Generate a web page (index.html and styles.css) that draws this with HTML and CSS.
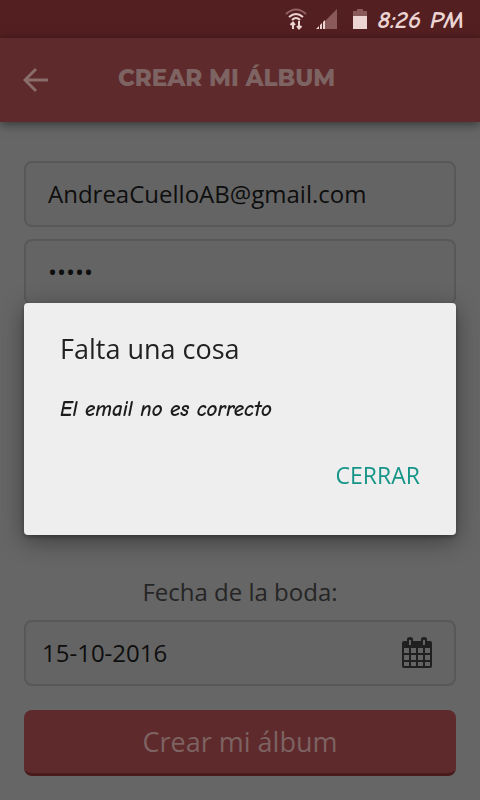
FILE: index.html
```html
<!DOCTYPE html>
<html lang="es">
<head>
<meta charset="utf-8">
<meta name="viewport" content="width=device-width, initial-scale=1">
<title>Crear mi álbum</title>
<link rel="stylesheet" href="styles.css">
</head>
<body>
<div class="status">
  <svg class="status-wifi" width="22" height="24" viewBox="0 0 22 24" fill="none" stroke-width="2">
    <path d="M1 7Q11-2 21 7" stroke="#8f6263"/>
    <path d="M4 10Q11 4 18 10M7 13Q11 9 15 13" stroke="#ecd4d3"/>
    <path d="M8 22V15M5.500 18L8 15.500L10 18M14 14V21M12 19L14 21.500L16.500 19" stroke="#ecd4d3"/>
  </svg>
  <svg class="status-signal" width="22" height="22" viewBox="0 0 22 22">
    <path d="M9 13L21 1V21H9Z" fill="#8a5a5a"/>
    <path d="M0 21L3 18V21ZM4 21V17L6 15V21ZM7 21V14L9 12V21Z" fill="#ecd4d3"/>
  </svg>
  <svg class="status-battery" width="14" height="22" viewBox="0 0 14 22">
    <path d="M0 3H4V1H10V3H14V8H0Z" fill="#8a5a5a"/>
    <path d="M0 8H14V21H0Z" fill="#ecd4d3"/>
  </svg>
  <span class="clock">8:26 PM</span>
</div>
<header class="topbar">
  <button class="back" type="button" aria-label="Atrás">
    <svg width="26" height="26" viewBox="0 0 26 26" fill="none" stroke="#8a6c6a" stroke-width="3"><path d="M25 13H3M13 2L2 13L13 24"/></svg>
  </button>
  <h1 class="title">CREAR MI ÁLBUM</h1>
</header>
<main>
  <form class="form">
    <input class="field" type="email" aria-label="Email" value="AndreaCuelloAB@gmail.com">
    <input class="field" type="password" aria-label="Contraseña" value="album">
    <label class="date-label" for="date">Fecha de la boda:</label>
    <div class="date-row">
      <input class="field date" id="date" type="text" value="15-10-2016">
      <svg class="calendar" width="30" height="32" viewBox="0 0 30 32">
        <path fill="#202020" fill-rule="evenodd" d="M2 4H5V2Q5 0 8 0T11 2V4H19V2Q19 0 22 0T25 2V4H28Q30 4 30 6V29Q30 31 28 31H2Q0 31 0 29V6Q0 4 2 4ZM7 3V8H9V3ZM21 3V8H23V3ZM2 11V16H7V11ZM9 11V16H14V11ZM16 11V16H21V11ZM23 11V16H28V11ZM2 18V23H7V18ZM9 18V23H14V18ZM16 18V23H21V18ZM23 18V23H28V18ZM2 25V29H7V25ZM9 25V29H14V25ZM16 25V29H21V25ZM23 25V29H28V25Z"/>
      </svg>
    </div>
    <button class="submit" type="button">Crear mi álbum</button>
  </form>
</main>
<div class="overlay">
  <section class="dialog" role="alertdialog" aria-labelledby="dialog-title" aria-describedby="dialog-text">
    <h2 class="dialog-title" id="dialog-title">Falta una cosa</h2>
    <p class="dialog-text" id="dialog-text">El email no es correcto</p>
    <button class="close" type="button">CERRAR</button>
  </section>
</div>
</body>
</html>
```
FILE: styles.css
```css
* { box-sizing: border-box; }

body {
  margin: 0;
  min-height: 100vh;
  background: #666;
  color: #0e0e0e;
  font-family: "Open Sans", "Noto Sans", sans-serif;
  font-size: 24px;
}

button, input { font: inherit; color: inherit; }

.status {
  display: flex;
  align-items: center;
  justify-content: flex-end;
  height: 38px;
  padding-right: 16px;
  background: #541f21;
  color: #ecd4d3;
}

.status-wifi { margin-right: 9px; }
.status-signal { margin-right: 15px; }
.status-battery { margin-right: 10px; }

.clock {
  font-family: "Comic Neue", "Lato", sans-serif;
  font-size: 25px;
  font-style: italic;
  font-weight: 700;
}

.topbar {
  display: flex;
  align-items: center;
  height: 84px;
  padding: 0 23px;
  background: #5f2a2c;
  box-shadow: 0 2px 10px rgba(0, 0, 0, 0.5);
}

.back {
  display: flex;
  padding: 0;
  border: 0;
  background: none;
}

.title {
  margin: 0 0 4px 69px;
  color: #7d6362;
  font-family: "Montserrat", "Inter", sans-serif;
  font-size: 23px;
  font-weight: 800;
  white-space: nowrap;
}

.form {
  display: flex;
  flex-direction: column;
  padding: 39px 24px 24px;
}

.field {
  width: 100%;
  height: 66px;
  margin-bottom: 12px;
  padding: 0 22px 2px;
  border: 2px solid #585858;
  border-radius: 8px;
  background: #646464;
}

.date-label {
  margin: 257px 0 10px;
  color: #252525;
  line-height: 36px;
  text-align: center;
}

.date-row {
  display: flex;
  align-items: center;
  margin-bottom: 24px;
  padding-right: 22px;
  border: 2px solid #585858;
  border-radius: 8px;
  background: #646464;
}

.date {
  flex: 1;
  width: auto;
  min-width: 0;
  height: 62px;
  margin: 0;
  padding: 0 16px 2px;
  border: 0;
  background: none;
}

.submit {
  height: 66px;
  padding: 0;
  border: 0;
  border-bottom: 3px solid #491b1d;
  border-radius: 8px;
  background: #5f2a2c;
  color: #7d6362;
  font-size: 27px;
}

.overlay {
  position: fixed;
  inset: 38px 0 0;
  display: flex;
  align-items: center;
  justify-content: center;
  padding: 0 24px;
}

.dialog {
  display: flex;
  flex-direction: column;
  width: 100%;
  padding: 28px 36px 36px;
  border-radius: 4px;
  background: #eee;
  box-shadow: 0 6px 24px rgba(0, 0, 0, 0.4), 0 2px 4px rgba(0, 0, 0, 0.3);
}

.dialog-title {
  margin: 0 0 24px;
  color: #212121;
  font-size: 27px;
  font-weight: 400;
  line-height: 36px;
}

.dialog-text {
  margin: 0 0 24px;
  color: #1c1c1c;
  font-family: "Comic Neue", "Lato", sans-serif;
  font-size: 21px;
  font-style: italic;
  font-weight: 700;
  line-height: 36px;
}

.close {
  align-self: flex-end;
  height: 48px;
  padding: 0;
  border: 0;
  background: none;
  color: #159588;
  font-size: 23px;
}
```
